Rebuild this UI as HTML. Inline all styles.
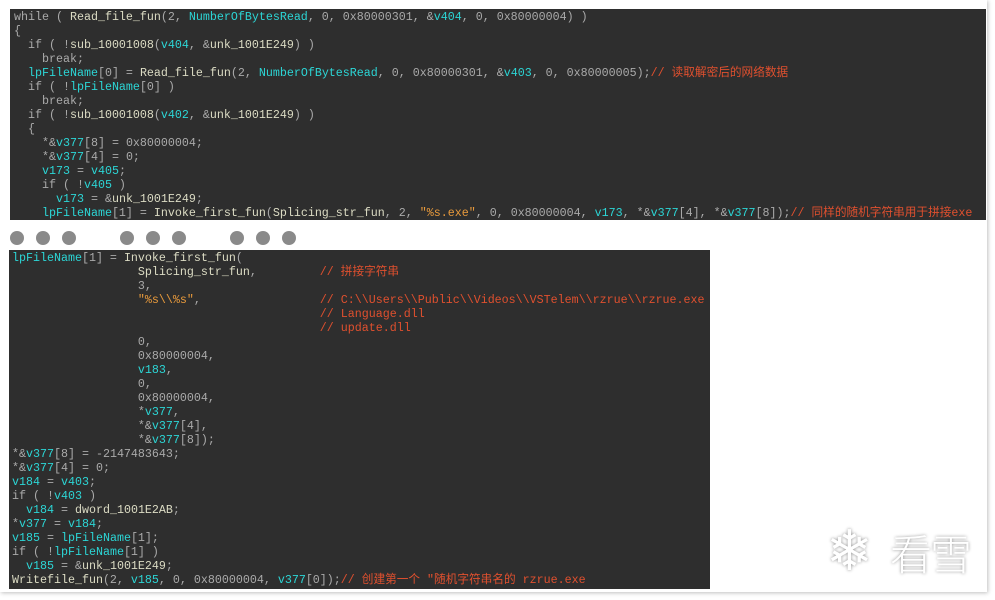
<!DOCTYPE html>
<html><head><meta charset="utf-8"><style>
body{margin:0;width:995px;height:600px;background:#fff;position:relative;overflow:hidden}
.frame{position:absolute;left:0;top:0;width:987px;height:592px;box-shadow:1px 1px 4px rgba(0,0,0,.25);background:#fff}
pre{margin:0;position:absolute;background:#2e2e2e;font-family:"Liberation Mono","Noto Sans CJK SC",monospace;font-size:11.67px;line-height:14px;color:#aaaaaa;overflow:hidden;white-space:pre;box-sizing:border-box}
.c{color:#2cd6d6}.f{color:#dcdcc4}.m{color:#e0502e}.s{color:#e89a3c}
.d{position:absolute;top:231px;width:14px;height:14px;border-radius:50%;background:#8a8a8a}
</style></head><body>
<div class="frame"></div>
<pre style="left:10px;top:9px;width:976px;height:211px;padding:1px 0 0 4px">while ( <span class="f">Read_file_fun</span>(2, <span class="c">NumberOfBytesRead</span>, 0, 0x80000301, &amp;<span class="c">v404</span>, 0, 0x80000004) )
{
  if ( !<span class="f">sub_10001008</span>(<span class="c">v404</span>, &amp;<span class="f">unk_1001E249</span>) )
    break;
  <span class="c">lpFileName</span>[0] = <span class="f">Read_file_fun</span>(2, <span class="c">NumberOfBytesRead</span>, 0, 0x80000301, &amp;<span class="c">v403</span>, 0, 0x80000005);<span class="m">// 读取解密后的网络数据</span>
  if ( !<span class="c">lpFileName</span>[0] )
    break;
  if ( !<span class="f">sub_10001008</span>(<span class="c">v402</span>, &amp;<span class="f">unk_1001E249</span>) )
  {
    *&amp;<span class="c">v377</span>[8] = 0x80000004;
    *&amp;<span class="c">v377</span>[4] = 0;
    <span class="c">v173</span> = <span class="c">v405</span>;
    if ( !<span class="c">v405</span> )
      <span class="c">v173</span> = &amp;<span class="f">unk_1001E249</span>;
    <span class="c">lpFileName</span>[1] = <span class="f">Invoke_first_fun</span>(<span class="f">Splicing_str_fun</span>, 2, <span class="s">"%s.exe"</span>, 0, 0x80000004, <span class="c">v173</span>, *&amp;<span class="c">v377</span>[4], *&amp;<span class="c">v377</span>[8]);<span class="m">// 同样的随机字符串用于拼接exe</span></pre>
<div class="d" style="left:10px"></div><div class="d" style="left:36px"></div><div class="d" style="left:62px"></div>
<div class="d" style="left:120px"></div><div class="d" style="left:146px"></div><div class="d" style="left:172px"></div>
<div class="d" style="left:230px"></div><div class="d" style="left:256px"></div><div class="d" style="left:282px"></div>
<pre style="left:9px;top:250px;width:701px;height:339px;padding:1px 0 0 3px"><span class="c">lpFileName</span>[1] = <span class="f">Invoke_first_fun</span>(
                  <span class="f">Splicing_str_fun</span>,         <span class="m">// 拼接字符串</span>
                  3,
                  <span class="s">"%s\\%s"</span>,                 <span class="m">// C:\\Users\\Public\\Videos\\VSTelem\\rzrue\\rzrue.exe</span>
                                            <span class="m">// Language.dll</span>
                                            <span class="m">// update.dll</span>
                  0,
                  0x80000004,
                  <span class="c">v183</span>,
                  0,
                  0x80000004,
                  *<span class="c">v377</span>,
                  *&amp;<span class="c">v377</span>[4],
                  *&amp;<span class="c">v377</span>[8]);
*&amp;<span class="c">v377</span>[8] = -2147483643;
*&amp;<span class="c">v377</span>[4] = 0;
<span class="c">v184</span> = <span class="c">v403</span>;
if ( !<span class="c">v403</span> )
  <span class="c">v184</span> = <span class="f">dword_1001E2AB</span>;
*<span class="c">v377</span> = <span class="c">v184</span>;
<span class="c">v185</span> = <span class="c">lpFileName</span>[1];
if ( !<span class="c">lpFileName</span>[1] )
  <span class="c">v185</span> = &amp;<span class="f">unk_1001E249</span>;
<span class="f">Writefile_fun</span>(2, <span class="c">v185</span>, 0, 0x80000004, <span class="c">v377</span>[0]);<span class="m">// 创建第一个 "随机字符串名的 rzrue.exe</span></pre>
<div style="position:absolute;left:826px;top:522px;font-size:56px;color:#fff;text-shadow:0 0 3px rgba(0,0,0,.45);font-family:'DejaVu Sans',sans-serif;line-height:60px">❄</div>
<div style="position:absolute;left:890px;top:528px;font-size:42px;color:#fff;text-shadow:0 0 3px rgba(0,0,0,.45);font-family:'Noto Sans CJK SC',sans-serif;font-weight:300;line-height:50px;letter-spacing:-2px">看雪</div>
</body></html>
